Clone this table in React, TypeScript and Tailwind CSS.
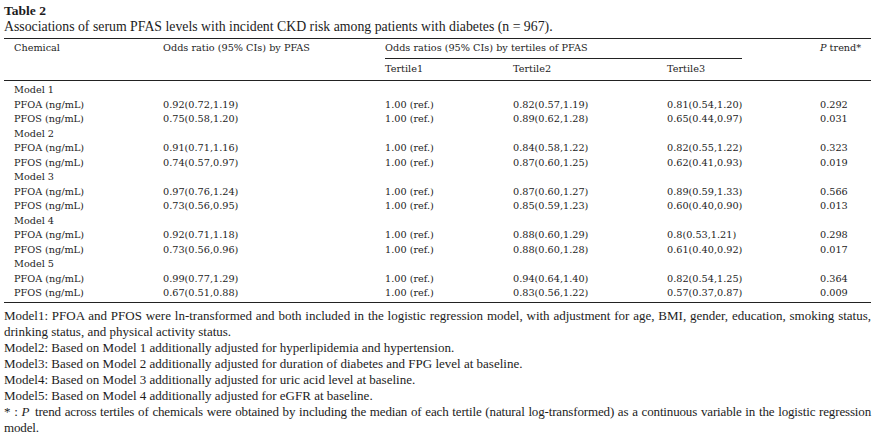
import React from 'react';

type Row = { label: string; or?: string; t1?: string; t2?: string; t3?: string; p?: string };

const models: [string, string, string, string, string][][] = [
  [
    ['0.92(0.72,1.19)', '1.00 (ref.)', '0.82(0.57,1.19)', '0.81(0.54,1.20)', '0.292'],
    ['0.75(0.58,1.20)', '1.00 (ref.)', '0.89(0.62,1.28)', '0.65(0.44,0.97)', '0.031'],
  ],
  [
    ['0.91(0.71,1.16)', '1.00 (ref.)', '0.84(0.58,1.22)', '0.82(0.55,1.22)', '0.323'],
    ['0.74(0.57,0.97)', '1.00 (ref.)', '0.87(0.60,1.25)', '0.62(0.41,0.93)', '0.019'],
  ],
  [
    ['0.97(0.76,1.24)', '1.00 (ref.)', '0.87(0.60,1.27)', '0.89(0.59,1.33)', '0.566'],
    ['0.73(0.56,0.95)', '1.00 (ref.)', '0.85(0.59,1.23)', '0.60(0.40,0.90)', '0.013'],
  ],
  [
    ['0.92(0.71,1.18)', '1.00 (ref.)', '0.88(0.60,1.29)', '0.8(0.53,1.21)', '0.298'],
    ['0.73(0.56,0.96)', '1.00 (ref.)', '0.88(0.60,1.28)', '0.61(0.40,0.92)', '0.017'],
  ],
  [
    ['0.99(0.77,1.29)', '1.00 (ref.)', '0.94(0.64,1.40)', '0.82(0.54,1.25)', '0.364'],
    ['0.67(0.51,0.88)', '1.00 (ref.)', '0.83(0.56,1.22)', '0.57(0.37,0.87)', '0.009'],
  ],
];

const rows: Row[] = [];
models.forEach((m, i) => {
  rows.push({ label: `Model ${i + 1}` });
  ['PFOA (ng/mL)', 'PFOS (ng/mL)'].forEach((name, j) => {
    const [or, t1, t2, t3, p] = m[j];
    rows.push({ label: name, or, t1, t2, t3, p });
  });
});

const cols = 'grid grid-cols-[159px_222px_128px_154px_133px_71px]';
const tableFont = { fontFamily: '"DejaVu Serif", serif' } as const;

export default function App() {
  return (
    <div
      className="w-[875px] h-[443px] bg-white text-[#1c1c1c] overflow-hidden"
      style={{ fontFamily: '"Liberation Serif", serif' }}
    >
      <div className="px-[4px] pt-[2px]">
        <div className="text-[13.5px] font-bold leading-[17px]">Table 2</div>
        <div className="text-[13.8px] leading-[16px]">
          Associations of serum PFAS levels with incident CKD risk among patients with diabetes (n = 967).
        </div>

        <div className="mt-[3px] border-t-[1.5px] border-[#222] text-[9.7px]" style={tableFont}>
          <div className={`${cols} h-[19px] items-center`}>
            <div className="pl-[10px]">Chemical</div>
            <div>Odds ratio (95% CIs) by PFAS</div>
            <div className="col-span-3">Odds ratios (95% CIs) by tertiles of PFAS</div>
            <div className="pl-[20px] whitespace-nowrap">
              <i>P</i> trend*
            </div>
          </div>
          <div className={`${cols} h-[22px]`}>
            <div />
            <div />
            <div className="col-span-3">
              <div className="w-[357px] border-t border-[#222]" />
              <div className="flex h-[21px] items-center">
                <div className="w-[128px]">Tertile1</div>
                <div className="w-[154px]">Tertile2</div>
                <div>Tertile3</div>
              </div>
            </div>
            <div />
          </div>
        </div>

        <div className="border-t-[1.5px] border-[#222] pt-[2px] pb-[1px] text-[9.7px]" style={tableFont}>
          {rows.map((r, i) => (
            <div key={i} className={`${cols} h-[14.5px] items-center leading-[14px]`}>
              <div className="pl-[10px]">{r.label}</div>
              <div>{r.or}</div>
              <div>{r.t1}</div>
              <div>{r.t2}</div>
              <div>{r.t3}</div>
              <div className="pl-[20px]">{r.p}</div>
            </div>
          ))}
        </div>

        <div className="border-t-[1.5px] border-[#222] pt-[5px] text-[13px] leading-[16px] text-justify">
          <div>
            Model1: PFOA and PFOS were ln-transformed and both included in the logistic regression model, with
            adjustment for age, BMI, gender, education, smoking status, drinking status, and physical activity status.
          </div>
          <div>Model2: Based on Model 1 additionally adjusted for hyperlipidemia and hypertension.</div>
          <div>Model3: Based on Model 2 additionally adjusted for duration of diabetes and FPG level at baseline.</div>
          <div>Model4: Based on Model 3 additionally adjusted for uric acid level at baseline.</div>
          <div>Model5: Based on Model 4 additionally adjusted for eGFR at baseline.</div>
          <div className="tracking-[-0.15px]">
            * : <i className="pr-[2px]">P</i> trend across tertiles of chemicals were obtained by including the median
            of each tertile (natural log-transformed) as a continuous variable in the logistic regression model.
          </div>
        </div>
      </div>
    </div>
  );
}
